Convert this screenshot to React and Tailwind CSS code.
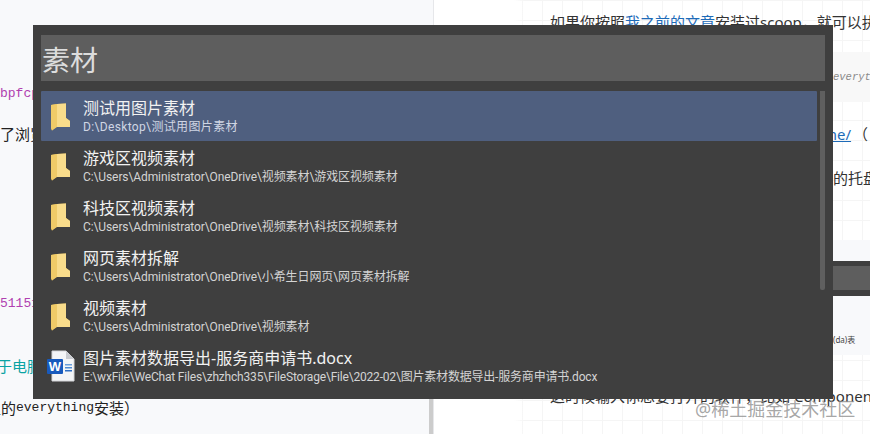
const cjk = "font-['Noto_Sans','Noto_Sans_CJK_SC',sans-serif]"

const results = [
  { name: "测试用图片素材", path: "D:\\Desktop\\测试用图片素材", active: true, tracking: "tracking-[0.35px]" },
  { name: "游戏区视频素材", path: "C:\\Users\\Administrator\\OneDrive\\视频素材\\游戏区视频素材", tracking: "tracking-[-0.1px]" },
  { name: "科技区视频素材", path: "C:\\Users\\Administrator\\OneDrive\\视频素材\\科技区视频素材", tracking: "tracking-[-0.1px]" },
  { name: "网页素材拆解", path: "C:\\Users\\Administrator\\OneDrive\\小希生日网页\\网页素材拆解", tracking: "tracking-[-0.1px]" },
  { name: "视频素材", path: "C:\\Users\\Administrator\\OneDrive\\视频素材", tracking: "tracking-[-0.1px]" },
  { name: "图片素材数据导出-服务商申请书.docx", path: "E:\\wxFile\\WeChat Files\\zhzhch335\\FileStorage\\File\\2022-02\\图片素材数据导出-服务商申请书.docx", word: true, tracking: "tracking-[-0.19px]" },
]

function FolderIcon() {
  return (
    <svg width="19" height="28" viewBox="0 0 19 28" className="ml-[10px] mt-[1px]">
      <path d="M0 2 L6 1 L15 0.5 L15 15 L19 18 L19 24 L5 24 L1 27.5 L0 25 Z" fill="#e9bf55" />
      <path d="M6 1 L15 0.5 L15 15 L19 18 L19 24 L6 24 Z" fill="#f9dc8b" />
      <path d="M0 2 L6 1 L6 24 L1 27.5 L0 25 Z" fill="#f0cb68" />
    </svg>
  )
}

function WordIcon() {
  return (
    <svg width="28" height="32" viewBox="0 0 28 32" className="ml-[6px]">
      <path d="M5 1 L19 1 L27 9 L27 31 L5 31 Z" fill="#f4f5f7" stroke="#d5d6d9" />
      <path d="M19 1 L19 9 L27 9 Z" fill="#c9cbd0" />
      <rect x="18" y="14" width="7" height="1.5" fill="#6b9fdc" />
      <rect x="18" y="17" width="7" height="1.5" fill="#4f8bd4" />
      <rect x="18" y="20" width="7" height="1.5" fill="#2f6fc4" />
      <rect x="0" y="9" width="16" height="15" rx="1" fill="#185abd" />
      <text x="8" y="21" textAnchor="middle" fontSize="13" fontWeight="700" fill="#fff" fontFamily="Liberation Sans">W</text>
    </svg>
  )
}

function ResultRow({ item }) {
  return (
    <div className={`h-[50px] flex rounded-[1px] ${item.active ? "bg-[#4f5f7f]" : ""}`}>
      <div className="w-[42px] flex items-center shrink-0">
        {item.word ? <WordIcon /> : <FolderIcon />}
      </div>
      <div className="flex flex-col min-w-0 pt-[8px]">
        <div className="text-[16px] leading-[18px] text-[#f2f2f2] whitespace-nowrap">{item.name}</div>
        <div className={`mt-[2px] font-['Roboto','Noto_Sans_CJK_SC',sans-serif] text-[12px] leading-[16px] whitespace-nowrap ${item.tracking} ${item.active ? "text-[#cfd6e4]" : "text-[#d4d4d4]"}`}>{item.path}</div>
      </div>
    </div>
  )
}

function LauncherOverlay() {
  return (
    <div className={`absolute left-[33px] top-[25px] w-[800px] h-[374px] bg-[#3f3f3f] px-2 pt-[10px] flex flex-col gap-[10px] overflow-hidden ${cjk}`}>
      <div className="h-[46px] shrink-0 bg-[#5e5e5e] flex items-center pl-[1px] pt-[4px] text-[28px] leading-[36px] text-[#dcdcdc]">素材</div>
      <div className="flex gap-[3px] flex-1 min-h-0">
        <div className="w-[776px] flex flex-col">
          {results.map((item) => (
            <ResultRow key={item.name} item={item} />
          ))}
        </div>
        <div className="w-[5px] h-[199px] bg-[#5f5f5f] rounded-b-[2px]"></div>
      </div>
    </div>
  )
}

function LeftArticle() {
  return (
    <div className="w-[434px] h-full shrink-0 bg-[#f8f9fb] flex overflow-hidden">
      <div className="flex-1 min-w-0 flex flex-col text-[15px] text-[#222] whitespace-nowrap">
        <div className="mt-[82px] h-6 flex items-center font-['Liberation_Mono',monospace] text-[13px] text-[#b040b0]">bpfcp</div>
        <div className="mt-[16px] h-6 flex items-center">了浏览器</div>
        <div className="mt-[146px] h-6 flex items-center font-['Liberation_Mono',monospace] text-[13px] text-[#b040b0]">51151</div>
        <div className="mt-[38px] h-6 flex items-center -ml-[3px] text-[#0aa3a3]">于电脑上</div>
        <div className="mt-[18px] h-6 flex items-center -ml-[14px]">
          里的<span className="font-['Liberation_Mono',monospace] text-[13px]">everything</span>安装）
        </div>
      </div>
      <div className="w-[5px] flex flex-col justify-end border-r border-[#e6e7ea]">
        <div className="h-[60px] w-[4px] bg-[#cccccc]"></div>
      </div>
    </div>
  )
}

function RightArticle() {
  return (
    <div className="flex-1 min-w-0 h-full bg-white bg-[linear-gradient(to_right,#ffffff_80px,transparent_90px),linear-gradient(to_right,transparent_8px,#f5f5f5_8px,#f5f5f5_9px,transparent_9px),linear-gradient(to_bottom,#f5f5f5_1px,transparent_1px)] bg-[size:100%_100%,20px_20px,20px_20px] flex flex-col text-[15px] text-[#333] whitespace-nowrap overflow-hidden">
      <div className="h-[42px] pl-[116px] pt-[2px] flex items-center shrink-0">
        如果你按照<span className="text-[#1e6bb8] underline">我之前的文章</span>安装过scoop，就可以执行
      </div>
      <div className="mt-[10px] h-[50px] shrink-0 bg-[#f8f8f8] pl-[399px] pt-[2px] flex items-center font-['Liberation_Mono',monospace] italic text-[10.5px] text-[#8a8a8a]">everything</div>
      <div className="mt-[20px] h-6 shrink-0 pl-[389px] flex items-center">
        <span className="text-[#1e6bb8] underline">me/</span><span className="ml-[2px]">（</span>
      </div>
      <div className="mt-[20px] h-6 shrink-0 pl-[399px] flex items-center">的托盘</div>
      <div className="mt-[50px] h-[115px] shrink-0 bg-[#f8f9fb] flex flex-col pl-[399px]">
        <div className="mt-[21px] h-[35px] -ml-[399px] bg-[#3f3f3f] pt-[5px] pb-[6px]">
          <div className="h-full bg-[#5e5e5e]"></div>
        </div>
        <div className="mt-[39px] text-[8px] leading-[10px] text-[#444]">(da)表</div>
      </div>
      <div className="mt-[29px] h-6 shrink-0 pl-[116px] flex items-center">
        这时候输入你想要打开的软件，比如<span className="ml-[4px]">Component</span>
      </div>
    </div>
  )
}

function App() {
  return (
    <div className={`relative w-[870px] h-[434px] overflow-hidden flex ${cjk}`}>
      <LeftArticle />
      <RightArticle />
      <LauncherOverlay />
      <div className="absolute left-[695px] top-[396px] text-[18px] leading-[26px] text-[#8f8f8f]/80 whitespace-nowrap">@稀土掘金技术社区</div>
    </div>
  )
}

export default App
